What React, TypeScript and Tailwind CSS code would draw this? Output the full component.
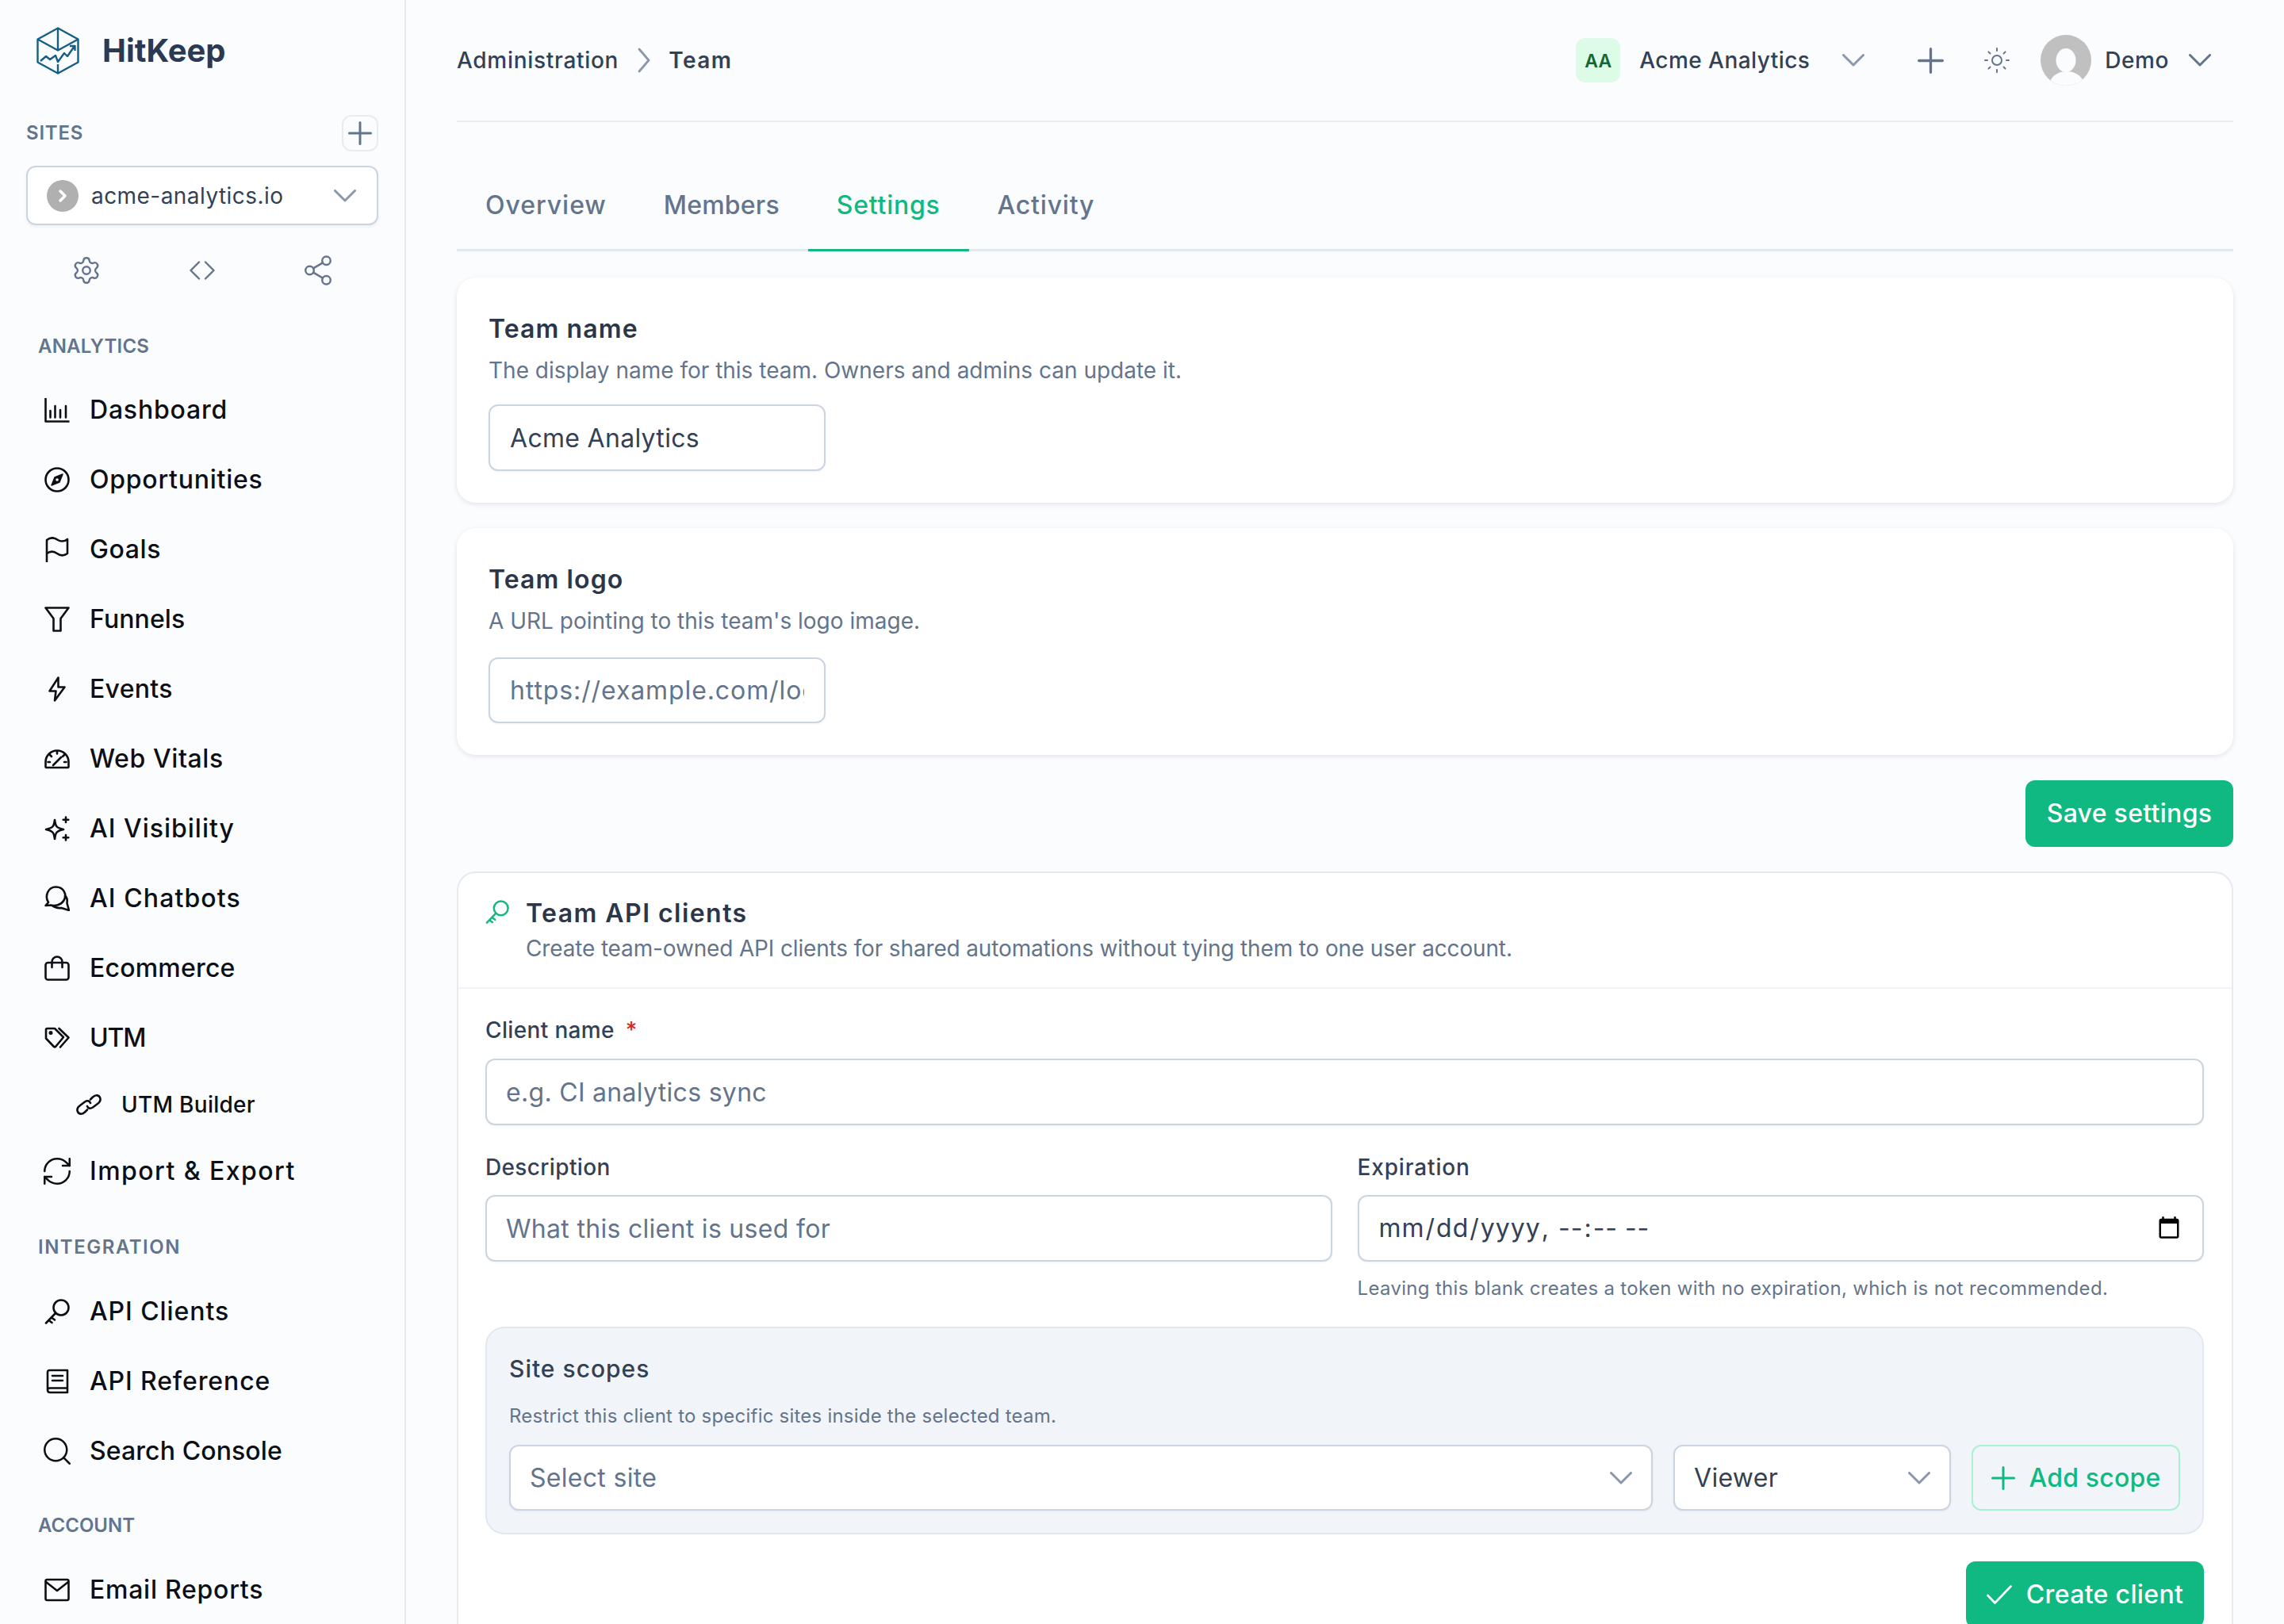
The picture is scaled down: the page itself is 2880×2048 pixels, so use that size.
import type { ReactNode } from "react";
import { ChevronRight, RefreshCw, Search, Settings, Share2, Sun } from "lucide-react";

type IconProps = { className?: string };

function Svg({ className, children, box = "0 0 32 32", sw = 2.6 }: IconProps & { children: ReactNode; box?: string; sw?: number }) {
  return (
    <svg viewBox={box} fill="none" stroke="currentColor" strokeWidth={sw} strokeLinecap="round" strokeLinejoin="round" className={className}>
      {children}
    </svg>
  );
}

const ChartIcon = (p: IconProps) => (
  <Svg {...p}>
    <path d="M1.500 1v29.500H31.500" strokeLinecap="butt" />
    <path d="M7.500 17v8.500M13.500 11v14.500M20 16v9.500M27 11v14.500" />
  </Svg>
);
const CompassIcon = (p: IconProps) => (
  <Svg {...p}>
    <circle cx="16" cy="16" r="14.500" />
    <path d="M23 9l-4 10-10 4 4-10z" fill="currentColor" strokeWidth="1.500" />
    <circle cx="16" cy="16" r="1.800" fill="#fafcfe" stroke="none" />
  </Svg>
);
const FlagIcon = (p: IconProps) => (
  <Svg {...p}>
    <path d="M3 31V4C8 0 13 1 17 4C20 6 25 6.500 29 3V21C25 24 20 24 16 21C12 18 7 18 3 21" />
  </Svg>
);
const FunnelIcon = (p: IconProps) => (
  <Svg {...p}>
    <path d="M1.500 1.500H30.500L20.500 15V30.500H11.500V15Z" />
  </Svg>
);
const BoltIcon = (p: IconProps) => (
  <Svg {...p}>
    <path d="M17.500 1.500L6.500 18.500H14.500L13 30.500L25.500 13.500H17.500Z" />
  </Svg>
);
const GaugeIcon = (p: IconProps) => (
  <Svg {...p}>
    <path d="M2.500 27H29.500Q30.500 27 30.500 26V20A14.500 14.500 0 0 0 1.500 20V26Q1.500 27 2.500 27Z" />
    <path d="M16 6.500V9.500M7 11l2 2M25 11l-2 2M4.500 20H7M27.500 20H25M11 24L21 14" />
  </Svg>
);
const SparkIcon = (p: IconProps) => (
  <Svg {...p}>
    <path d="M13 5C14 13 15 15 24 17C15 19 14 21 13 29C12 21 11 19 2 17C11 15 12 13 13 5Z" />
    <path d="M27 1.500V8M23.700 4.800H30.300M27 24V30.500M23.700 27.300H30.300" />
  </Svg>
);
const ChatIcon = (p: IconProps) => (
  <Svg {...p}>
    <path d="M8 24.500L1.500 25L5 21C0 13 4.500 1.500 14.500 1.500C24 1.500 29 11 24.500 18.500C21 24.500 13 26 8 24.500Z" />
    <path d="M26 13C28 14 29 18 28.500 22L31 31L21.500 28C17 28.500 13 27.500 10 25" />
  </Svg>
);
const BagIcon = (p: IconProps) => (
  <Svg {...p}>
    <rect x="1.500" y="9" width="29" height="21.500" rx="3" />
    <path d="M9.500 15V8a6.500 6.500 0 0 1 13 0V15" />
  </Svg>
);
const TagsIcon = (p: IconProps) => (
  <Svg {...p}>
    <path d="M3.500 4H13L24 15L14.500 26.500Q13 28 11.500 26.500L2 16.500V5.500Q2 4 3.500 4Z" />
    <path d="M18.500 4L30.500 15.500L20 27.500" />
    <circle cx="8" cy="9.500" r="1.200" fill="currentColor" />
  </Svg>
);
const LinkIcon = (p: IconProps) => (
  <Svg {...p}>
    <path d="M14 22.500L11 25.500C7 29 3 28 1.800 24.500C0.800 21.500 2 19 5 17L11 12.500C14 10.500 17 11 18 14" />
    <path d="M18 9.500L21 6.500C25 3 29 4 30.200 7.500C31.200 10.500 30 13 27 15L21 19.500C18 21.500 15 21 14 18" />
  </Svg>
);
const KeyIcon = (p: IconProps) => (
  <Svg {...p}>
    <circle cx="21" cy="11" r="9.500" />
    <path d="M14 18L2 30.500M5.500 27L9.500 30M9 23.500L13 26.500" />
  </Svg>
);
const BookIcon = (p: IconProps) => (
  <Svg {...p}>
    <path d="M4 27V4.500Q4 2 6.500 2H29V30H7Q4 30 4 27ZM4 27Q4 24.500 7 24.500H29" />
    <path d="M10 9H23M10 15H23" />
  </Svg>
);
const MailIcon = (p: IconProps) => (
  <Svg {...p}>
    <rect x="1.500" y="3" width="29" height="26" rx="2" />
    <path d="M2 6L16 17L30 6" />
  </Svg>
);
const AngleDown = ({ className }: IconProps) => (
  <Svg className={className} box="0 0 28 16" sw={3}>
    <path d="M1.500 1.500L14 14L26.500 1.500" />
  </Svg>
);
const PlusIcon = ({ className }: IconProps) => (
  <Svg className={className} box="0 0 30 30" sw={3}>
    <path d="M15 1.500V28.500M1.500 15H28.500" />
  </Svg>
);

function Logo() {
  return (
    <svg viewBox="0 0 54 60" fill="none" stroke="#155e85" strokeWidth="2.400" strokeLinejoin="round" className="h-[60px] w-[54px]">
      <path d="M27 1.500L52.500 15.500V44.500L27 58.500L1.500 44.500V15.500Z" />
      <path d="M1.500 15.500L27 29.500L52.500 15.500M27 1.500V29.500M27 47V58.500" />
      <path d="M5 43L12 37L17 41L24 36L27 44L35 33L39 37L48 24M42 24H48.500V30" />
    </svg>
  );
}

function Avatar() {
  return (
    <div className="h-16 w-16 overflow-hidden rounded-full bg-[#c0c0c0]">
      <svg viewBox="0 0 64 64" className="h-16 w-16">
        <ellipse cx="32" cy="32" rx="12.500" ry="15" fill="#fafcfe" />
        <ellipse cx="33" cy="64" rx="22" ry="18" fill="#fafcfe" />
      </svg>
    </div>
  );
}

const navIcon = "h-8 w-8 shrink-0";
const wideNavIcon = "-mx-[5px] h-[42px] w-[42px] shrink-0";

function NavItem({ icon, label, tr }: { icon: ReactNode; label: string; tr: string }) {
  return (
    <div className="flex h-[88px] items-center gap-[25px] pl-[56px] text-[32px] font-medium text-[#0c0f14]">
      {icon}
      <span className={tr}>{label}</span>
    </div>
  );
}

function SectionLabel({ children, className }: { children: string; className: string }) {
  return <div className={`h-8 pl-[48px] text-[24px] leading-8 font-semibold text-[#64748b] ${className}`}>{children}</div>;
}

function Sidebar() {
  return (
    <aside className="h-[2048px] w-[512px] shrink-0 overflow-hidden border-r-2 border-[#e6eaf0]">
      <div className="flex items-center gap-[29px] pt-[34px] pl-[46px]">
        <Logo />
        <span className="text-[40px] leading-[60px] font-bold text-[#2b3a52]">HitKeep</span>
      </div>
      <div className="mt-[51px] px-[33px]">
        <div className="flex h-[46px] items-center justify-between">
          <span className="text-[24px] font-semibold tracking-[0.8px] text-[#64748b]">SITES</span>
          <div className="flex h-[46px] w-[46px] items-center justify-center rounded-xl border-2 border-[#e8ecf2] text-[#64748b]">
            <PlusIcon className="h-[30px] w-[30px]" />
          </div>
        </div>
        <div className="mt-[18px] flex h-[75px] items-center rounded-xl border-2 border-[#cbd5e1] bg-white pr-[26px] pl-[24px] shadow-[0_2px_4px_rgba(0,0,0,0.06)]">
          <div className="flex h-10 w-10 items-center justify-center rounded-full bg-[#b0b0b0] text-white">
            <ChevronRight className="h-6 w-6" strokeWidth={3.5} />
          </div>
          <span className="ml-[16px] flex-1 text-[28px] font-normal tracking-[0.45px] text-[#334155]">acme-analytics.io</span>
          <AngleDown className="h-4 w-7 text-[#8b97aa]" />
        </div>
      </div>
      <div className="mx-auto mt-[41px] grid h-8 w-[438px] grid-cols-3 grid-rows-[32px] items-center justify-items-center text-[#64748b]">
        <Settings className="h-[38px] w-[38px]" strokeWidth={1.5} />
        <Svg className="h-8 w-8" sw={2.4}>
          <path d="M12 5.500L1.500 16L12 26.500M20 5.500L30.500 16L20 26.500" />
        </Svg>
        <Share2 className="h-[42px] w-[42px]" strokeWidth={1.4} />
      </div>
      <SectionLabel className="mt-[64px] tracking-[0.2px]">ANALYTICS</SectionLabel>
      <div className="mt-[20px]">
        <NavItem tr="tracking-[0.8px]" icon={<ChartIcon className={navIcon} />} label="Dashboard" />
        <NavItem tr="tracking-[0.75px]" icon={<CompassIcon className={navIcon} />} label="Opportunities" />
        <NavItem tr="tracking-[0.6px]" icon={<FlagIcon className={navIcon} />} label="Goals" />
        <NavItem tr="tracking-[0.1px]" icon={<FunnelIcon className={navIcon} />} label="Funnels" />
        <NavItem tr="tracking-[0.3px]" icon={<BoltIcon className={navIcon} />} label="Events" />
        <NavItem tr="tracking-[0.6px]" icon={<GaugeIcon className={navIcon} />} label="Web Vitals" />
        <NavItem tr="tracking-[1px]" icon={<SparkIcon className={navIcon} />} label="AI Visibility" />
        <NavItem tr="tracking-[1.1px]" icon={<ChatIcon className={navIcon} />} label="AI Chatbots" />
        <NavItem tr="tracking-[0.2px]" icon={<BagIcon className={navIcon} />} label="Ecommerce" />
        <NavItem tr="-tracking-[1.2px]" icon={<TagsIcon className={navIcon} />} label="UTM" />
        <div className="flex h-20 items-center gap-[25px] pl-[96px] text-[28px] font-medium tracking-[0.27px] text-[#0c0f14]">
          <LinkIcon className={navIcon} />
          <span>UTM Builder</span>
        </div>
        <NavItem tr="tracking-[1.45px]" icon={<RefreshCw className={wideNavIcon} strokeWidth={1.45} />} label="Import & Export" />
      </div>
      <SectionLabel className="mt-[36px] tracking-[1.5px]">INTEGRATION</SectionLabel>
      <div className="mt-[21px]">
        <NavItem tr="tracking-[0.93px]" icon={<KeyIcon className={navIcon} />} label="API Clients" />
        <NavItem tr="tracking-[0.88px]" icon={<BookIcon className={navIcon} />} label="API Reference" />
        <NavItem tr="tracking-[0.1px]" icon={<Search className={wideNavIcon} strokeWidth={1.45} />} label="Search Console" />
      </div>
      <SectionLabel className="mt-[34px]">ACCOUNT</SectionLabel>
      <div className="mt-[21px]">
        <NavItem tr="tracking-[0.74px]" icon={<MailIcon className={navIcon} />} label="Email Reports" />
      </div>
    </aside>
  );
}

function Header() {
  return (
    <header className="flex h-[154px] items-center justify-between border-b-2 border-[#e8ebf0] text-[28px] font-medium text-[#334155]">
      <div className="flex items-center">
        <span className="tracking-[0.7px]">Administration</span>
        <Svg className="mr-[23px] ml-[24px] h-8 w-4 text-[#8b97aa]" box="0 0 16 32" sw={2.8}>
          <path d="M2 2L14 16L2 30" />
        </Svg>
        <span className="font-semibold tracking-[1.5px]">Team</span>
      </div>
      <div className="flex items-center pr-[28px]">
        <div className="flex h-14 w-14 items-center justify-center rounded-xl bg-[#dcfce7] pt-[2px] text-[23px] font-semibold text-[#166534]">AA</div>
        <span className="ml-[24px] tracking-[0.45px]">Acme Analytics</span>
        <AngleDown className="ml-[41px] h-4 w-7 text-[#8b97aa]" />
        <PlusIcon className="ml-[67px] h-[33px] w-[33px] text-[#64748b]" />
        <Sun className="ml-[49px] h-9 w-9 text-[#64748b]" strokeWidth={1.3} />
        <div className="ml-[37px]">
          <Avatar />
        </div>
        <span className="ml-[17px] tracking-[0.55px]">Demo</span>
        <AngleDown className="ml-[25px] h-4 w-7 text-[#64748b]" />
      </div>
    </header>
  );
}

function Tabs() {
  const tabs = [
    { label: "Overview", tr: "tracking-[0.95px]" },
    { label: "Members", tr: "tracking-[0.2px]" },
    { label: "Settings", tr: "tracking-[0.75px]" },
    { label: "Activity", tr: "tracking-[0.8px]" },
  ];
  return (
    <div className="mt-[50px] flex h-[113px] border-b-[3px] border-[#e2e8f0]">
      {tabs.map((t) => (
        <div
          key={t.label}
          className={
            t.label === "Settings"
              ? "flex h-[113px] items-center border-b-[3px] border-[#10b981] px-[36px] text-[32px] font-medium text-[#10b981]"
              : "flex h-[113px] items-center border-b-[3px] border-transparent px-[36px] text-[32px] font-medium text-[#64748b]"
          }
        >
          <span className={t.tr}>{t.label}</span>
        </div>
      ))}
    </div>
  );
}

function SettingCard({ title, desc, children, className }: { title: string; desc: string; children: ReactNode; className: string }) {
  return (
    <section className={`rounded-[24px] bg-white pt-[45px] pb-[40px] pl-[40px] shadow-[0_2px_6px_rgba(15,23,42,0.1)] ${className}`}>
      <h2 className="text-[32px] leading-10 font-semibold tracking-[1.1px] text-[#2b3648]">{title}</h2>
      <p className="mt-[12px] text-[28px] leading-10 font-normal text-[#64748b]">{desc}</p>
      {children}
    </section>
  );
}

function Label({ children }: { children: ReactNode }) {
  return <label className="block h-9 text-[28px] leading-9 font-medium tracking-[0.35px] text-[#334155]">{children}</label>;
}

const fieldClass =
  "block h-[84px] w-full rounded-xl border-2 border-[#cbd5e1] bg-white px-[24px] text-[32px] tracking-[0.3px] text-[#334155] shadow-[0_1px_3px_rgba(0,0,0,0.06)] outline-none placeholder:text-[#64748b]";

function FakeSelect({ text, muted, className }: { text: string; muted?: boolean; className: string }) {
  return (
    <div className={`flex h-[83px] items-center justify-between rounded-xl border-2 border-[#cbd5e1] bg-white pr-[24px] pl-[24px] text-[32px] tracking-[0.3px] shadow-[0_1px_3px_rgba(0,0,0,0.06)] ${muted ? "text-[#64748b]" : "text-[#334155]"} ${className}`}>
      <span>{text}</span>
      <AngleDown className="h-4 w-7 text-[#8b97aa]" />
    </div>
  );
}

function ApiClients() {
  return (
    <section className="mt-[31px] rounded-t-[24px] border-2 border-[#e6e9ee] bg-white">
      <div className="flex gap-[21px] border-b-2 border-[#f1f5f9] pt-[31px] pr-[34px] pb-[29px] pl-[34px]">
        <KeyIcon className="mt-[3px] h-[30px] w-[30px] shrink-0 text-[#10b981]" />
        <div>
          <h2 className="text-[32px] leading-10 font-semibold tracking-[1.45px] text-[#2b3648]">Team API clients</h2>
          <p className="mt-[4px] text-[28px] leading-10 font-normal -tracking-[0.15px] text-[#64748b]">
            Create team-owned API clients for shared automations without tying them to one user account.
          </p>
        </div>
      </div>
      <div className="pt-[34px] pr-[35px] pb-[60px] pl-[34px]">
        <Label>
          Client name <span className="ml-[6px] text-[#dc2626]">*</span>
        </Label>
        <input readOnly placeholder="e.g. CI analytics sync" className={`mt-[18px] ${fieldClass}`} />
        <div className="mt-[35px] grid grid-cols-2 gap-x-[32px]">
          <div>
            <Label>Description</Label>
            <input readOnly placeholder="What this client is used for" className={`mt-[17px] ${fieldClass}`} />
          </div>
          <div>
            <Label>
              <span className="tracking-[0.85px]">Expiration</span>
            </Label>
            <input type="datetime-local" className={`mt-[17px] ${fieldClass} tracking-[1px]`} />
            <p className="mt-[18px] text-[24px] leading-8 tracking-[0.32px] text-[#64748b]">
              Leaving this blank creates a token with no expiration, which is not recommended.
            </p>
          </div>
        </div>
        <div className="mt-[32px] rounded-[24px] border-2 border-[#e2e8f0] bg-[#f1f5f9] px-[28px] pt-[31px] pb-[28px]">
          <h3 className="text-[30px] leading-10 font-medium tracking-[1px] text-[#334155]">Site scopes</h3>
          <p className="mt-[24px] text-[24px] leading-8 tracking-[0.22px] text-[#64748b]">
            Restrict this client to specific sites inside the selected team.
          </p>
          <div className="mt-[20px] flex gap-[26px]">
            <FakeSelect text="Select site" muted className="flex-1" />
            <FakeSelect text="Viewer" className="w-[350px]" />
            <div className="flex h-[83px] w-[263px] items-center justify-center gap-[18px] rounded-xl border-2 border-[#a7f3d0] text-[32px] font-medium tracking-[0.2px] text-[#10b981]">
              <PlusIcon className="h-[30px] w-[30px]" />
              <span>Add scope</span>
            </div>
          </div>
        </div>
        <div className="mt-[34px] ml-auto flex h-[84px] w-[300px] items-center justify-center gap-[18px] rounded-xl bg-[#10b981] text-[32px] font-medium tracking-[0.35px] text-white">
          <Svg className="h-6 w-8" box="0 0 32 24" sw={2.6}>
            <path d="M1.500 13L10.500 22.500L30.500 1.500" />
          </Svg>
          <span>Create client</span>
        </div>
      </div>
    </section>
  );
}

const cardInput =
  "block w-[425px] rounded-xl border-2 border-[#cbd5e1] bg-white px-[25px] text-[32px] text-[#334155] shadow-[0_1px_3px_rgba(0,0,0,0.06)] outline-none placeholder:text-[#64748b]";

export default function App() {
  return (
    <div className="flex h-[2048px] overflow-hidden bg-[#fafcfe] font-[Inter,sans-serif]">
      <Sidebar />
      <main className="min-w-0 flex-1 px-[64px]">
        <Header />
        <Tabs />
        <SettingCard className="mt-[33px]" title="Team name" desc="The display name for this team. Owners and admins can update it.">
          <input readOnly value="Acme Analytics" className={`mt-[23px] h-[84px] tracking-[0.3px] ${cardInput}`} />
        </SettingCard>
        <SettingCard className="mt-[32px]" title="Team logo" desc="A URL pointing to this team's logo image.">
          <input readOnly placeholder="https://example.com/logo.png" className={`mt-[26px] h-[83px] tracking-[0.9px] ${cardInput}`} />
        </SettingCard>
        <div className="mt-[32px] ml-auto flex h-[84px] w-[262px] items-center justify-center rounded-xl bg-[#10b981] text-[32px] font-medium tracking-[0.3px] text-white">
          Save settings
        </div>
        <ApiClients />
      </main>
    </div>
  );
}
